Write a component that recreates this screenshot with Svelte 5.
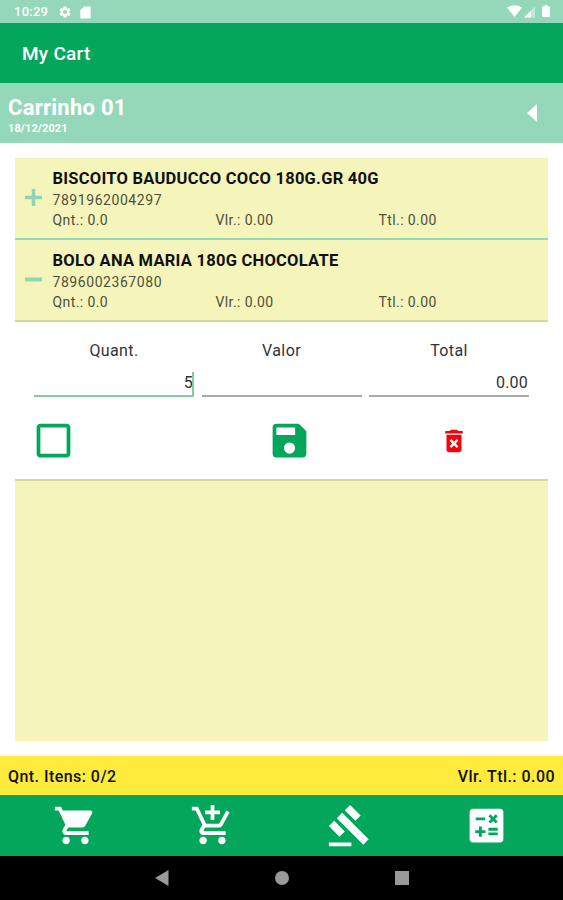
<script>
  const items = [
    { name: 'BISCOITO BAUDUCCO COCO 180G.GR 40G', code: '7891962004297', open: false },
    { name: 'BOLO ANA MARIA 180G CHOCOLATE', code: '7896002367080', open: true }
  ];
</script>

<div class="screen">
  <div class="status">
    <span class="time">10:29</span>
    <svg class="gear" viewBox="0 0 24 24"><path fill-rule="evenodd" d="M19.14 12.94c.04-.3.06-.61.06-.94s-.02-.64-.07-.94l2.03-1.58a.5.5 0 0 0 .12-.61l-1.92-3.32a.5.5 0 0 0-.59-.22l-2.39.96a7 7 0 0 0-1.62-.94l-.36-2.54a.5.5 0 0 0-.48-.41h-3.84a.5.5 0 0 0-.47.41l-.36 2.54a7 7 0 0 0-1.62.94l-2.39-.96a.5.5 0 0 0-.59.22L2.74 8.87a.5.5 0 0 0 .12.61l2.03 1.58a6 6 0 0 0 0 1.88l-2.03 1.58a.5.5 0 0 0-.12.61l1.92 3.32c.12.22.37.29.59.22l2.39-.96c.5.38 1.03.7 1.62.94l.36 2.54c.05.24.24.41.48.41h3.84c.24 0 .44-.17.47-.41l.36-2.54a7 7 0 0 0 1.62-.94l2.39.96c.22.08.47 0 .59-.22l1.92-3.32a.5.5 0 0 0-.12-.61zM12 15.6a3.6 3.6 0 1 1 0-7.2 3.6 3.6 0 0 1 0 7.2z" /></svg>
    <svg class="sd" viewBox="0 0 11 13"><path d="M4 .5h5.5q1.200 0 1.200 1.200v9.600q0 1.200-1.200 1.200h-8Q.3 12.500.3 11.300V4.200z" /></svg>
    <span class="grow"></span>
    <svg class="wifi" viewBox="0 0 15 12"><path d="M0 2.600Q7.500-2.200 15 2.600L7.500 12z" /></svg>
    <svg class="signal" viewBox="0 0 12 12"><path opacity=".45" d="M0 12 12 0v12z" /><path d="M0 12 7.500 4.500V12z" /></svg>
    <svg class="battery" viewBox="0 0 8 12"><path d="M2.500 0h3v1.200H7q1 0 1 1V11q0 1-1 1H1q-1 0-1-1V2.200q0-1 1-1h1.500z" /></svg>
  </div>

  <header class="appbar">My Cart</header>

  <div class="cart-head">
    <div>
      <div class="cart-name">Carrinho 01</div>
      <div class="cart-date">18/12/2021</div>
    </div>
    <svg class="back" viewBox="0 0 10 18"><path d="M10 0v18L0 9z" /></svg>
  </div>

  <main>
    <div class="list">
      {#each items as item}
        <div class="item" class:open={item.open}>
          <svg class="toggle" viewBox="0 0 17 17">
            <path d={item.open ? 'M0 6.500h17v4H0z' : 'M0 6.700h6.700V0h3.600v6.700H17v3.600h-6.700V17H6.700v-6.700H0z'} />
          </svg>
          <div class="info">
            <div class="name">{item.name}</div>
            <div class="code">{item.code}</div>
            <div class="values"><span>Qnt.: 0.0</span><span>Vlr.: 0.00</span><span>Ttl.: 0.00</span></div>
          </div>
        </div>
      {/each}

      <div class="detail">
        <div class="fields">
          <div class="field focus"><label for="quant">Quant.</label><div class="value" id="quant">5<i></i></div></div>
          <div class="field"><label for="valor">Valor</label><div class="value" id="valor"></div></div>
          <div class="field"><label for="total">Total</label><div class="value" id="total">0.00</div></div>
        </div>
        <div class="actions">
          <svg class="check" viewBox="0 0 24 24"><path d="M19 5v14H5V5zm0-2H5c-1.100 0-2 .9-2 2v14c0 1.100.9 2 2 2h14c1.100 0 2-.9 2-2V5c0-1.100-.9-2-2-2z" /></svg>
          <svg class="save" viewBox="0 0 24 24"><path d="M17 3H5a2 2 0 0 0-2 2v14a2 2 0 0 0 2 2h14c1.100 0 2-.9 2-2V7zm-5 16a3 3 0 1 1 0-6 3 3 0 0 1 0 6zm3-10H5V5h10z" /></svg>
          <svg class="trash" viewBox="0 0 24 24"><path d="M6 19c0 1.100.9 2 2 2h8c1.100 0 2-.9 2-2V7H6zm2.460-7.120 1.410-1.410L12 12.590l2.120-2.120 1.410 1.410L13.410 14l2.120 2.120-1.410 1.410L12 15.410l-2.120 2.120-1.410-1.410L10.590 14zM15.500 4l-1-1h-5l-1 1H5v2h14V4z" /></svg>
        </div>
      </div>
    </div>
  </main>

  <div class="totals"><span class="count">Qnt. Itens: 0/2</span><span class="sum">Vlr. Ttl.: 0.00</span></div>

  <nav>
    <svg viewBox="0 0 24 24"><path d="M7 18c-1.100 0-1.990.9-1.990 2S5.900 22 7 22s2-.9 2-2-.9-2-2-2zM1 2v2h2l3.600 7.590-1.350 2.450c-.16.28-.25.61-.25.96 0 1.100.9 2 2 2h12v-2H7.420c-.14 0-.25-.11-.25-.25l.03-.12.900-1.630h7.450c.75 0 1.410-.41 1.750-1.030l3.580-6.490A1 1 0 0 0 20 4H5.210l-.94-2zm16 16c-1.100 0-1.990.9-1.990 2s.89 2 1.990 2 2-.9 2-2-.9-2-2-2z" /></svg>
    <svg viewBox="0 0 24 24"><path d="M11 9h2V6h3V4h-3V1h-2v3H8v2h3zm-4 9c-1.100 0-1.990.9-1.990 2S5.900 22 7 22s2-.9 2-2-.9-2-2-2zm10 0c-1.100 0-1.990.9-1.990 2s.89 2 1.990 2 2-.9 2-2-.9-2-2-2zm-9.830-3.250.03-.12.900-1.630h7.450c.75 0 1.410-.41 1.750-1.030l3.860-7.010L19.420 4h-.01l-1.100 2-2.760 5H8.530l-.13-.27L6.160 6l-.95-2-.94-2H1v2h2l3.600 7.590-1.350 2.450c-.16.28-.25.61-.25.96 0 1.100.9 2 2 2h12v-2H7.420c-.13 0-.25-.11-.25-.25z" /></svg>
    <svg viewBox="0 0 24 24"><path d="M1 21h12v2H1zM5.245 8.070l2.830-2.827 14.140 14.142-2.828 2.828zM12.317 1l5.657 5.656-2.830 2.830-5.654-5.660zM3.825 9.485l5.657 5.657-2.828 2.828-5.657-5.657z" /></svg>
    <svg viewBox="0 0 24 24"><path fill-rule="evenodd" d="M19 3H5a2 2 0 0 0-2 2v14a2 2 0 0 0 2 2h14a2 2 0 0 0 2-2V5a2 2 0 0 0-2-2zm-5.970 4.060L14.090 6l1.410 1.410L16.910 6l1.060 1.060-1.410 1.410 1.410 1.410-1.060 1.060-1.410-1.400-1.410 1.410-1.060-1.060 1.410-1.410zM6.250 7.720h5v1.500h-5zM11.500 16h-2v2H8v-2H6v-1.500h2v-2h1.500v2h2zm6.500 1.250h-5v-1.500h5zm0-2.500h-5v-1.500h5z" /></svg>
  </nav>

  <div class="system">
    <svg viewBox="0 0 120 16"><path d="M0 8 13.500 0v16z" /></svg>
    <svg viewBox="0 0 120 16"><circle cx="7" cy="8" r="7" /></svg>
    <svg viewBox="0 0 120 16"><rect y="1" width="14" height="14" /></svg>
  </div>
</div>

<style>
  :global(body) { background: #fff; }
  .screen { width: 563px; height: 900px; display: flex; flex-direction: column; font-family: Roboto, sans-serif; overflow: hidden; background: #fff; color: #111; }
  .screen > * { flex: none; box-sizing: border-box; }
  svg { display: block; flex: none; fill: #fff; }
  .status { height: 23px; background: #95d8b9; display: flex; align-items: center; padding: 0 17px 0 14px; color: #fff; }
  .time { font-size: 13px; font-weight: 500; width: 44px; letter-spacing: .25px; }
  .gear { width: 14px; height: 14px; margin-top: 1px; }
  .sd { width: 11px; height: 13px; margin: 1px 0 0 8px; }
  .grow { flex: 1; }
  .wifi { width: 15px; height: 12px; margin: -1px 2px 0 0; }
  .signal { width: 11px; height: 12px; margin-right: 7px; }
  .battery { width: 8px; height: 12px; margin: -2px -4px 0 0; }
  .appbar { height: 59.5px; background: #03a65a; color: #fff; font-size: 19px; font-weight: 500; line-height: 61px; padding-left: 22px; letter-spacing: .25px; }
  .cart-head { height: 60.5px; background: #95d8b9; color: #fff; display: flex; justify-content: space-between; padding: 11px 26px 0 8px; font-weight: 700; }
  .cart-name { font-size: 22px; line-height: 27px; letter-spacing: .25px; }
  .cart-date { font-size: 11px; line-height: 16px; letter-spacing: .1px; }
  .back { width: 10px; height: 18px; margin-top: 10.500px; }
  main { height: 613px; padding: 15px; }
  .list { height: 583px; background: #f5f5bb; }
  .item { height: 82px; box-sizing: border-box; border-bottom: 2.500px solid #95d8b9; display: flex; padding: 10px 0 0 10px; }
  .item.open { border-bottom: 2px solid #d6d6a0; }
  .toggle { width: 17px; height: 17px; fill: #90d6b5; margin: 21px 10.500px 0 0; }
  .info { flex: 1; padding-top: 1px; }
  .name { font-size: 16.5px; font-weight: 700; line-height: 20px; letter-spacing: .25px; color: #111; }
  .code { font-size: 14px; line-height: 22px; color: #4f4f3c; letter-spacing: .56px; }
  .values { display: flex; font-size: 14px; line-height: 19px; color: #4f4f3c; letter-spacing: .4px; }
  .values span { width: 163px; }
  .detail { height: 159px; box-sizing: border-box; background: #fff; border-bottom: 2px solid #d6d6a0; padding: 18px 19px 0; }
  .fields { display: flex; gap: 7.5px; }
  .field { width: 160px; flex: none; }
  .field label { display: block; text-align: center; font-size: 16px; line-height: 21px; letter-spacing: .4px; color: #333; }
  .value { height: 36px; box-sizing: border-box; border-bottom: 2px solid #ababab; font-size: 16px; line-height: 44px; text-align: right; color: #333; padding-right: 1px; display: flex; justify-content: flex-end; letter-spacing: .2px; }
  .focus .value { border-color: #83cba3; padding: 0; }
  .value i { width: 2px; height: 23px; margin: 11px 0 0 -1px; background: #83cba3; }
  .actions { display: flex; align-items: center; height: 46px; margin-top: 20.5px; }
  .check, .save { width: 45px; height: 45px; fill: #03a65a; }
  .check { margin-left: -3px; }
  .save { margin-left: 191px; }
  .trash { width: 30px; height: 30px; fill: #f8000c; margin-left: 127px; }
  .totals { height: 39px; background: #ffeb3b; display: flex; justify-content: space-between; padding: 0 8px; font-size: 16px; font-weight: 500; line-height: 42px; letter-spacing: .45px; }
  nav { height: 61px; background: #03a65a; display: flex; padding: 0 7px; align-items: center; }
  nav svg { width: 45px; height: 45px; margin: -1px 46px 0; }
  .system { height: 44px; background: #000; display: flex; padding: 0 0 0 155px; align-items: center; }
  .system svg { width: 120px; height: 16px; fill: #999; }
</style>
